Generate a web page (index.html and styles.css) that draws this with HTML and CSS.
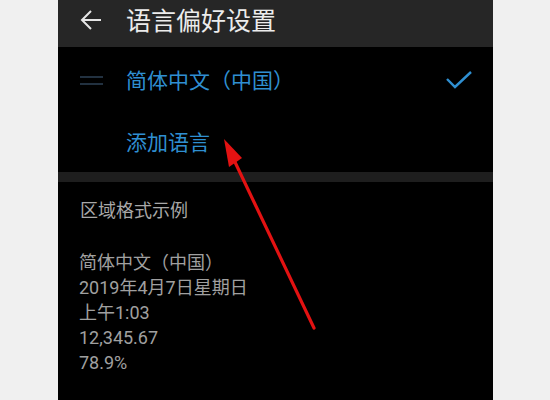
FILE: index.html
```html
<!DOCTYPE html>
<html lang="zh-CN">
<head>
<meta charset="utf-8">
<title>语言偏好设置</title>
<link rel="stylesheet" href="styles.css">
</head>
<body>
<div class="phone">
  <header class="topbar">
    <svg class="back" width="22" height="22" viewBox="0 0 22 22">
      <path d="M21 11H2M11 2L2 11L11 20" fill="none" stroke="#e6e6e6" stroke-width="2"/>
    </svg>
    <h1 class="title">语言偏好设置</h1>
  </header>
  <div class="row lang">
    <svg class="handle" width="23" height="9" viewBox="0 0 23 9">
      <path d="M0 1H23M0 8H23" stroke="#223140" stroke-width="2"/>
    </svg>
    <span class="lang-name">简体中文（中国）</span>
    <svg class="check" width="26" height="19" viewBox="0 0 26 19">
      <path d="M1 9L9 17L25 2" fill="none" stroke="#2f8fd1" stroke-width="2.4"/>
    </svg>
  </div>
  <div class="row add">添加语言</div>
  <div class="band"></div>
  <section class="region">
    <div class="region-title">区域格式示例</div>
    <div class="examples">
      <div>简体中文（中国）</div>
      <div>2019年4月7日星期日</div>
      <div>上午1:03</div>
      <div>12,345.67</div>
      <div>78.9%</div>
    </div>
  </section>
  <svg class="arrow" width="435" height="400" viewBox="0 0 435 400">
    <line x1="176" y1="160" x2="256" y2="328" stroke="#e31212" stroke-width="3.2" stroke-linecap="round"/>
    <polygon points="166,139 171,167 184,158" fill="#e31212"/>
  </svg>
</div>
</body>
</html>
```

FILE: styles.css
```css
html, body {
  margin: 0;
  padding: 0;
}
body {
  background: #f0f0f0;
  width: 550px;
  height: 400px;
  overflow: hidden;
  font-family: "Noto Sans CJK SC", "Noto Sans", sans-serif;
}
.phone {
  position: relative;
  width: 435px;
  height: 400px;
  margin-left: 58px;
  background: #000;
  overflow: hidden;
}
.topbar {
  height: 47px;
  background: #262626;
  display: flex;
  align-items: center;
  padding-left: 22px;
  box-sizing: border-box;
}
.back {
  display: block;
  margin-top: -8px;
}
.title {
  margin: -10px 0 0 24px;
  font-size: 25px;
  font-weight: 400;
  color: #ececec;
  line-height: 30px;
}
.row {
  display: flex;
  align-items: center;
}
.lang {
  height: 66px;
  padding: 0 21px 0 22px;
}
.handle {
  display: block;
  margin-right: 23px;
}
.lang-name {
  flex: 1;
  font-size: 21px;
  color: #2f8fd1;
  line-height: 28px;
  margin-top: -2px;
}
.check {
  display: block;
  margin-top: -2px;
}
.add {
  height: 59px;
  padding-left: 68px;
  font-size: 21px;
  color: #2f8fd1;
  padding-bottom: 4px;
  box-sizing: border-box;
}
.band {
  height: 10px;
  background: #1e1e1e;
}
.region {
  padding: 15px 0 0 21px;
  color: #a0a0a0;
  font-size: 18px;
  line-height: 25px;
}
.region-title {
  padding-left: 1px;
  color: #a8a8a8;
}
.examples {
  margin-top: 28px;
  font-family: Roboto, "Noto Sans CJK SC", sans-serif;
}
.arrow {
  position: absolute;
  left: 0;
  top: 0;
  pointer-events: none;
}
```
